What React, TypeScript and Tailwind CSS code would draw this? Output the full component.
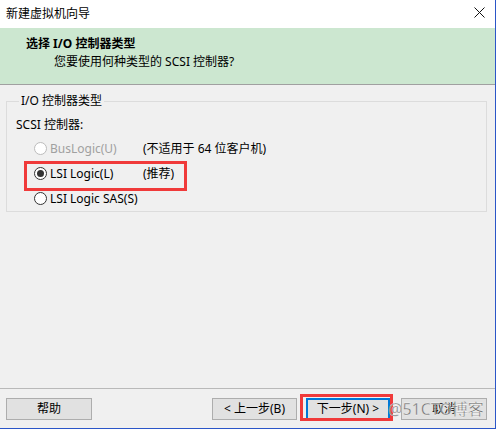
import React from 'react'

const FONT = { fontFamily: '"Noto Sans", "Noto Sans CJK SC", sans-serif' }

function Radio({ checked = false, disabled = false }: { checked?: boolean; disabled?: boolean }) {
  return (
    <span
      className={
        'flex h-[13px] w-[13px] flex-none items-center justify-center rounded-full border bg-white ' +
        (disabled ? 'border-[#bcbcbc] bg-[#f4f4f4]' : 'border-[#333333]')
      }
    >
      {checked && <span className="h-[7px] w-[7px] rounded-full bg-[#333333]" />}
    </span>
  )
}

function Btn({ label, primary = false }: { label: string; primary?: boolean }) {
  return (
    <div
      className={
        'flex h-[22px] items-center justify-center bg-[#e1e1e1] text-[12px] leading-none text-black ' +
        (primary ? 'border-2 border-[#0078d7]' : 'border border-[#adadad]')
      }
    >
      {label}
    </div>
  )
}

export default function App() {
  return (
    <div className="flex h-[430px] w-[497px] bg-white" style={FONT}>
      <div className="flex h-[429px] w-[496px] flex-col border-r border-b border-[#2b56c8]">
        {/* title bar */}
        <div className="flex h-[28px] flex-none items-center justify-between bg-white pl-[6px] pr-[10px]">
          <span className="text-[12px] text-black">新建虚拟机向导</span>
          <svg width="11" height="11" viewBox="0 0 11 11" className="mb-[3px]">
            <path d="M0.5 0.5 L10.5 10.5 M10.5 0.5 L0.5 10.5" stroke="#111" strokeWidth="1" />
          </svg>
        </div>

        {/* header */}
        <div className="flex h-[57px] flex-none flex-col border-b border-[#a0a0a0] bg-[#cce7d0] pt-[7px]">
          <div className="pl-[26px] text-[12px] font-bold leading-[18px] text-black">选择 I/O 控制器类型</div>
          <div className="pl-[54px] text-[12px] leading-[18px] text-black">您要使用何种类型的 SCSI 控制器?</div>
        </div>

        {/* body */}
        <div className="flex flex-1 flex-col bg-[#f0f0f0]">
          <fieldset className="mt-[8px] ml-[6px] h-[119px] w-[481px] border border-[#dcdcdc] pl-[9px]">
            <legend className="ml-[3px] px-[2px] text-[12px] leading-[16px] text-black">I/O 控制器类型</legend>
            <div className="mt-[8px] text-[12px] leading-[16px] text-black">SCSI 控制器:</div>
            <div className="mt-[3px] flex flex-col">
              <div className="flex h-[25px] items-center pl-[18px]">
                <Radio disabled />
                <span className="ml-[3px] w-[93px] text-[12px] text-[#a0a0a0]">BusLogic(U)</span>
                <span className="text-[12px] text-black">(不适用于 64 位客户机)</span>
              </div>
              <div className="relative flex h-[25px] items-center pl-[18px]">
                <div className="absolute top-[0px] left-[8px] h-[30px] w-[163px] border-[3px] border-[#f03a3a]" />
                <Radio checked />
                <span className="ml-[3px] w-[93px] text-[12px] text-black">LSI Logic(L)</span>
                <span className="text-[12px] text-black">(推荐)</span>
              </div>
              <div className="flex h-[25px] items-center pl-[18px]">
                <Radio />
                <span className="ml-[3px] text-[12px] text-black">LSI Logic SAS(S)</span>
              </div>
            </div>
          </fieldset>
        </div>

        {/* footer */}
        <div className="relative flex h-[40px] flex-none items-start border-t border-[#b9b9b9] bg-[#f0f0f0] pt-[9px]">
          <div className="ml-[6px] w-[86px]">
            <Btn label="帮助" />
          </div>
          <div className="ml-[120px] w-[85px]">
            <Btn label="< 上一步(B)" />
          </div>
          <div className="relative ml-[9px] w-[84px]">
            <div className="absolute -top-[4px] -left-[6px] h-[27px] w-[93px] border-[3px] border-[#f03a3a]" />
            <Btn label="下一步(N) >" primary />
          </div>
          <div className="ml-[11px] w-[86px]">
            <Btn label="取消" />
          </div>
          <span
            className="absolute top-[10px] left-[388px] text-[16px] leading-[20px] text-[#707070]"
            style={{ WebkitTextStroke: '0.3px #ffffff' }}
          >
            @51CTO博客
          </span>
        </div>
      </div>
    </div>
  )
}
